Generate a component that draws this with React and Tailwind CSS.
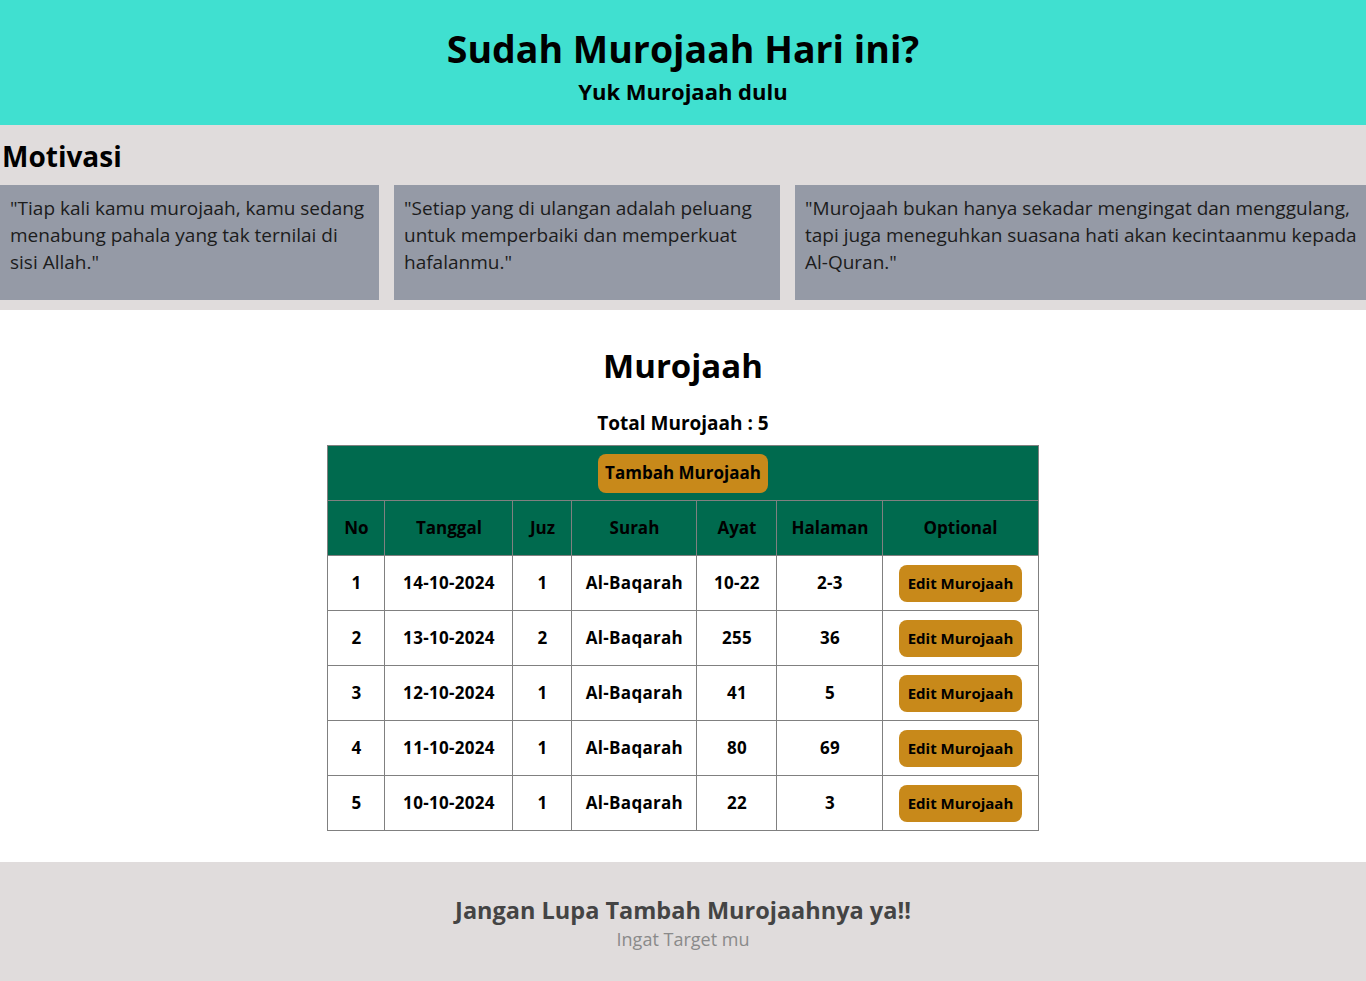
const quotes = [
  {
    text: (
      <>
        "Tiap kali kamu murojaah, kamu sedang menabung pahala yang tak ternilai di
        <br />
        sisi Allah."
      </>
    ),
    w: 'w-[379px] shrink-0',
  },
  { text: '"Setiap yang di ulangan adalah peluang untuk memperbaiki dan memperkuat hafalanmu."', w: 'w-[386px] shrink-0' },
  { text: '"Murojaah bukan hanya sekadar mengingat dan menggulang, tapi juga meneguhkan suasana hati akan kecintaanmu kepada Al-Quran."', w: 'flex-1' },
];

const rows = [
  { no: 1, tanggal: '14-10-2024', juz: 1, surah: 'Al-Baqarah', ayat: '10-22', halaman: '2-3' },
  { no: 2, tanggal: '13-10-2024', juz: 2, surah: 'Al-Baqarah', ayat: '255', halaman: '36' },
  { no: 3, tanggal: '12-10-2024', juz: 1, surah: 'Al-Baqarah', ayat: '41', halaman: '5' },
  { no: 4, tanggal: '11-10-2024', juz: 1, surah: 'Al-Baqarah', ayat: '80', halaman: '69' },
  { no: 5, tanggal: '10-10-2024', juz: 1, surah: 'Al-Baqarah', ayat: '22', halaman: '3' },
];

const cols = [
  { label: 'No', w: 'w-[57px]' },
  { label: 'Tanggal', w: 'w-[128px]' },
  { label: 'Juz', w: 'w-[59px]' },
  { label: 'Surah', w: 'w-[125px]' },
  { label: 'Ayat', w: 'w-[80px]' },
  { label: 'Halaman', w: 'w-[106px]' },
  { label: 'Optional', w: 'w-[155px]' },
];

const td = 'border border-[#808080] h-[55px] text-center p-0';

export default function App() {
  return (
    <div className="font-['Open_Sans',sans-serif] text-black">
      <header className="bg-[#40e0d0] h-[125px] flex flex-col items-center pt-[24px]">
        <h1 className="text-[37.5px] font-bold leading-[50px]">Sudah Murojaah Hari ini?</h1>
        <p className="text-[22px] font-bold leading-[30px] mt-[2px]">Yuk Murojaah dulu</p>
      </header>

      <section className="bg-[#e0dcdc] pb-[10px]">
        <h2 className="text-[28px] font-bold leading-[36px] pl-[2px] pt-[13px] pb-[11px]">Motivasi</h2>
        <div className="flex gap-[15px]">
          {quotes.map((q, i) => (
            <div key={i} className={`${q.w} bg-[#959aa6] h-[115px] pl-[10px] pr-[4px] pt-[10px] text-[19px] leading-[27px] text-[#1c1c1c]`}>
              {q.text}
            </div>
          ))}
        </div>
      </section>

      <section className="bg-white flex flex-col items-center pt-[32px] pb-[31px]">
        <h2 className="text-[33px] font-bold leading-[48px]">Murojaah</h2>
        <p className="text-[19px] font-bold leading-[28px] mt-[19px] mb-[8px]">Total Murojaah : 5</p>
        <table className="border-collapse w-[710px] table-fixed">
          <colgroup>
            {cols.map(c => (
              <col key={c.label} className={c.w} />
            ))}
          </colgroup>
          <thead>
            <tr className="bg-[#006a4e]">
              <td colSpan={7} className={td}>
                <button className="bg-[#c8891a] rounded-[8px] w-[170px] h-[39px] text-[17px] font-bold">
                  Tambah Murojaah
                </button>
              </td>
            </tr>
            <tr className="bg-[#006a4e]">
              {cols.map(c => (
                <th key={c.label} className={`${td} text-[17px] font-bold`}>{c.label}</th>
              ))}
            </tr>
          </thead>
          <tbody>
            {rows.map(r => (
              <tr key={r.no} className="text-[17px] font-bold tracking-[0.3px]">
                <td className={td}>{r.no}</td>
                <td className={td}>{r.tanggal}</td>
                <td className={td}>{r.juz}</td>
                <td className={td}>{r.surah}</td>
                <td className={td}>{r.ayat}</td>
                <td className={td}>{r.halaman}</td>
                <td className={td}>
                  <button className="bg-[#c8891a] rounded-[8px] w-[123px] h-[37px] text-[15px] font-bold tracking-normal">
                    Edit Murojaah
                  </button>
                </td>
              </tr>
            ))}
          </tbody>
        </table>
      </section>

      <footer className="bg-[#e0dcdc] h-[120px] flex flex-col items-center pt-[32px]">
        <h3 className="text-[23.5px] font-bold leading-[32px] text-[#444444]">Jangan Lupa Tambah Murojaahnya ya!!</h3>
        <p className="text-[18px] leading-[26px] text-[#8a8a8a]">Ingat Target mu</p>
      </footer>
    </div>
  );
}
